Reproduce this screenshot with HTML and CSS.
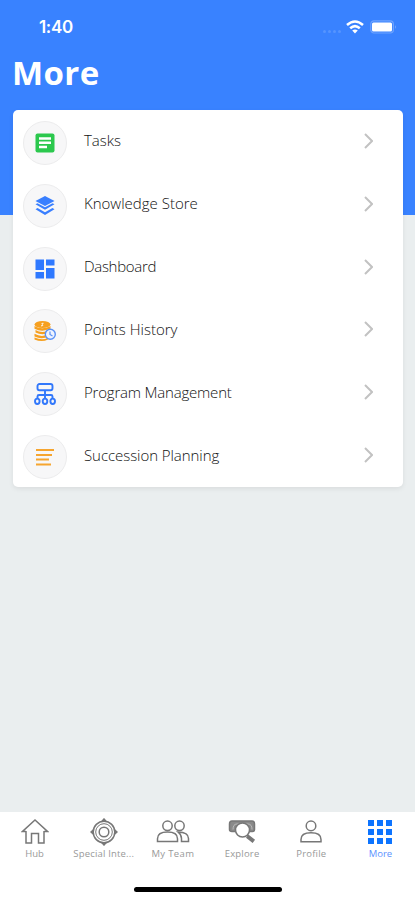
FILE: index.html
```html
<!DOCTYPE html>
<html lang="en">
<head>
<meta charset="utf-8">
<meta name="viewport" content="width=device-width, initial-scale=1">
<title>More</title>
<link rel="stylesheet" href="styles.css">
</head>
<body>
<div class="screen">
  <header class="header">
    <div class="status">
      <span class="time">1:40</span>
      <div class="indicators">
        <div class="signal"><i></i><i></i><i></i><i></i></div>
        <svg class="wifi" width="18" height="14" viewBox="0 0 18 14" fill="none" stroke="#fff" stroke-width="2.5"><path d="M1 5Q9-2 17 5M4.2 8.3Q9 4 13.8 8.3"/><path d="M9 13.4 6.2 10.6Q9 8.6 11.8 10.6Z" fill="#fff" stroke="none"/></svg>
        <svg class="battery" width="27" height="14" viewBox="0 0 27 14"><rect x=".8" y=".8" width="22.6" height="12.2" rx="3.2" fill="none" stroke="#6fa4ff" stroke-width="1.2"/><rect x="2" y="2.4" width="20" height="9" rx="1.5" fill="#fff"/><path d="M25 5q1.5 2 0 4z" fill="#8db7ff"/></svg>
      </div>
    </div>
    <h1 class="title">More</h1>
  </header>
  <main class="card">
    <a class="row"><span class="disc"><svg width="20" height="20" viewBox="0 0 20 20"><rect x=".5" y=".5" width="19" height="19" rx="2" fill="#2bc84d"/><path d="M4 5.500h12M4 9.800h12M4 14h8" stroke="#fff" stroke-width="2.400"/></svg></span><span class="label tasks">Tasks</span><svg class="chevron" viewBox="0 0 9 16"><path d="m1 1 7 7-7 7"/></svg></a>
    <a class="row"><span class="disc"><svg width="20" height="20" viewBox="0 0 20 20" fill="#397fff"><path d="m10 0 9.500 5-9.500 5L.5 5z"/><path d="m.5 8.300 2-1 7.500 4 7.500-4 2 1-9.500 5.500zM.5 13.200l2-1.200 7.500 4.200 7.500-4.200 2 1.200L10 19z"/></svg></span><span class="label store">Knowledge Store</span><svg class="chevron" viewBox="0 0 9 16"><path d="m1 1 7 7-7 7"/></svg></a>
    <a class="row"><span class="disc"><svg width="20" height="20" viewBox="0 0 20 20" fill="#2f79ff"><path d="M.5.5H9V11H.5zM11 .5h8.500v6H11zM.5 13H9v6.500H.5zM11 9h8.500v10.500H11z"/></svg></span><span class="label dashboard">Dashboard</span><svg class="chevron" viewBox="0 0 9 16"><path d="m1 1 7 7-7 7"/></svg></a>
    <a class="row"><span class="disc"><svg width="22" height="20" viewBox="0 0 22 20"><g fill="#f6a020"><ellipse cx="8.500" cy="3.500" rx="8" ry="3.500"/><path d="M.5 5Q8 9.500 16.500 5v2.800Q8 11.500.5 7.700zM1.500 9q7 4 14 0v2.500q-7 3.500-14 0zM.5 12.800Q8 17 15 12.800v2.500Q8 19 .5 15.500zM.5 16.500Q8 20 14 16.800v1.700Q8 21.500.5 18.500z"/></g><path d="M9.500 2.300H8.200q-1 .8.300 1.300 1.100.6-.3 1.200H7" fill="none" stroke="#fff"/><circle cx="16.300" cy="13.300" r="5" fill="#eff4ff" stroke="#5b91f5" stroke-width="1.400"/><path d="M16 10.500v3l2.500 1.500" fill="none" stroke="#5b91f5" stroke-width="1.200"/></svg></span><span class="label points">Points History</span><svg class="chevron" viewBox="0 0 9 16"><path d="m1 1 7 7-7 7"/></svg></a>
    <a class="row"><span class="disc"><svg width="22" height="22" viewBox="0 0 22 22" fill="none" stroke="#3278fb" stroke-width="1.900"><rect x="3.500" y="1" width="15" height="6.300" rx="2"/><path d="M11 7.500V16M3.500 16v-2.500q0-1.500 1.500-1.500h12q1.500 0 1.500 1.500V16"/><ellipse cx="3.300" cy="18.300" rx="2.300" ry="2.700"/><ellipse cx="11" cy="18.300" rx="2.300" ry="2.700"/><ellipse cx="18.700" cy="18.300" rx="2.300" ry="2.700"/></svg></span><span class="label program">Program Management</span><svg class="chevron" viewBox="0 0 9 16"><path d="m1 1 7 7-7 7"/></svg></a>
    <a class="row"><span class="disc"><svg width="20" height="20" viewBox="0 0 20 20" fill="none" stroke="#f6a52f" stroke-width="2"><path d="M1 3h18M1 8h16M1 12.500h13M1 17.500h15"/></svg></span><span class="label succession">Succession Planning</span><svg class="chevron" viewBox="0 0 9 16"><path d="m1 1 7 7-7 7"/></svg></a>
  </main>
  <footer class="footer">
    <nav class="tabs">
      <a class="tab"><svg viewBox="0 0 28 28"><path d="M5 13v12h5.500v-9.500h7V25H23V13M5 13.500H1.500L14 2l12.500 11.500H23"/></svg><span class="hub">Hub</span></a>
      <a class="tab"><svg viewBox="0 0 28 28"><circle cx="14" cy="14" r="10.800"/><circle cx="14" cy="14" r="8.300" stroke-width="1"/><circle cx="14" cy="14" r="4.800"/><path d="M12 3.200 14 1l2 2.200M12 24.800 14 27l2-2.200M3.200 12 1 14l2.200 2M24.800 12 27 14l-2.200 2" fill="#777"/></svg><span class="special">Special Inte...</span></a>
      <a class="tab"><svg class="team" viewBox="0 0 34 28"><circle cx="11.500" cy="7.800" r="4.700"/><circle cx="23.500" cy="7.800" r="4.700"/><path d="M1.500 23.500v-2.800q0-6.700 10-6.700t10 6.700v2.800zM22 14q10.500.3 10.500 6.500v3h-7v-3q0-3.800-3.500-6.500z"/></svg><span class="my-team">My Team</span></a>
      <a class="tab"><svg viewBox="0 0 28 28"><path d="M4 3h20q2.500 0 2.500 3v5.500q0 2-2 2H4q-2.500 0-2.500-2V6Q1.500 3 4 3z" fill="#8a8a8a" stroke="#777"/><path d="M5 11.500Q5 6 9 6h11q4 0 4 5.500" stroke="#bbb" stroke-width="1"/><circle cx="14.500" cy="12" r="7" fill="#fff"/><path d="m19 17 2 1.500M20.500 17.500l5.500 4.500-1.500 2-5.500-4.500z" fill="#777"/></svg><span class="explore">Explore</span></a>
      <a class="tab"><svg viewBox="0 0 28 28"><circle cx="14" cy="7.900" r="4.800"/><path d="M4 23.700v-2.300q0-6.700 10-6.700t10 6.700v2.300z"/></svg><span class="profile">Profile</span></a>
      <a class="tab active"><svg viewBox="0 0 28 28"><path d="M2 2h6v6H2zM11 2h6v6h-6zM20 2h6v6h-6zM2 11h6v6H2zM11 11h6v6h-6zM20 11h6v6h-6zM2 20h6v6H2zM11 20h6v6h-6zM20 20h6v6h-6z"/></svg><span class="more">More</span></a>
    </nav>
    <div class="home-bar"></div>
  </footer>
</div>
</body>
</html>
```
FILE: styles.css
```css
* { box-sizing: border-box; }
body { margin: 0; font-family: "Open Sans", "Noto Sans", sans-serif; }
.screen { width: 415px; height: 900px; display: flex; flex-direction: column; background: #eaeeef; overflow: hidden; }
.header { height: 215px; flex: none; background: #3982ff; color: #fff; }
.status { height: 53px; padding: 1px 18px 0 39px; display: flex; justify-content: space-between; align-items: center; }
.time { font: 600 17px/20px Inter, sans-serif; letter-spacing: -.35px; }
.indicators { display: flex; align-items: center; }
.signal { display: flex; gap: 2px; margin: 9px 5px 0 0; }
.signal i { width: 3px; height: 3px; border-radius: 50%; background: #5594ff; }
.wifi { margin-right: 6px; }
.title { margin: 0; padding: 0 0 0 12px; font: 700 33px/40px "Open Sans", sans-serif; letter-spacing: .4px; }
.card { width: 390px; height: 377px; flex: none; margin: -105px 0 0 13px; background: #fff; border-radius: 5px; box-shadow: 0 2px 5px #00000012; z-index: 1; }
.row { height: 62.83px; padding: 1px 29px 0 10px; display: flex; align-items: center; }
.disc { width: 44px; height: 44px; margin-top: 2px; flex: none; border: 1px solid #ececed; border-radius: 50%; background: #f7f7f8; display: flex; align-items: center; justify-content: center; }
.label { flex: 1; margin-left: 17px; padding-bottom: 3px; font-size: 15px; line-height: 22px; font-weight: 300; color: #111; white-space: nowrap; }
.dashboard { letter-spacing: -.3px; }
.program { letter-spacing: -.2px; }
.succession { letter-spacing: -.06px; }
.chevron { width: 9px; height: 16px; margin: 0 1px 2px 0; fill: none; stroke: #c2c2c2; stroke-width: 2; }
.footer { height: 88px; flex: none; margin-top: auto; background: #fff; display: flex; flex-direction: column; align-items: center; }
.tabs { width: 415px; display: grid; grid-template-columns: repeat(6, 1fr); height: 74px; padding-top: 6px; }
.tab { display: flex; flex-direction: column; align-items: center; color: #999; font-size: 9.5px; line-height: 15px; white-space: nowrap; }
.tab svg { width: 28px; height: 28px; fill: none; stroke: #777; stroke-width: 1.5; }
.tab .team { width: 34px; }
.special { letter-spacing: .18px; }
.my-team { letter-spacing: .35px; }
.explore, .profile { letter-spacing: .2px; }
.tab.active { color: #5b91ff; }
.tab.active svg { fill: #0d74ff; stroke: none; }
.home-bar { width: 148px; height: 5px; border-radius: 3px; background: #000; margin-top: 1px; }
```
